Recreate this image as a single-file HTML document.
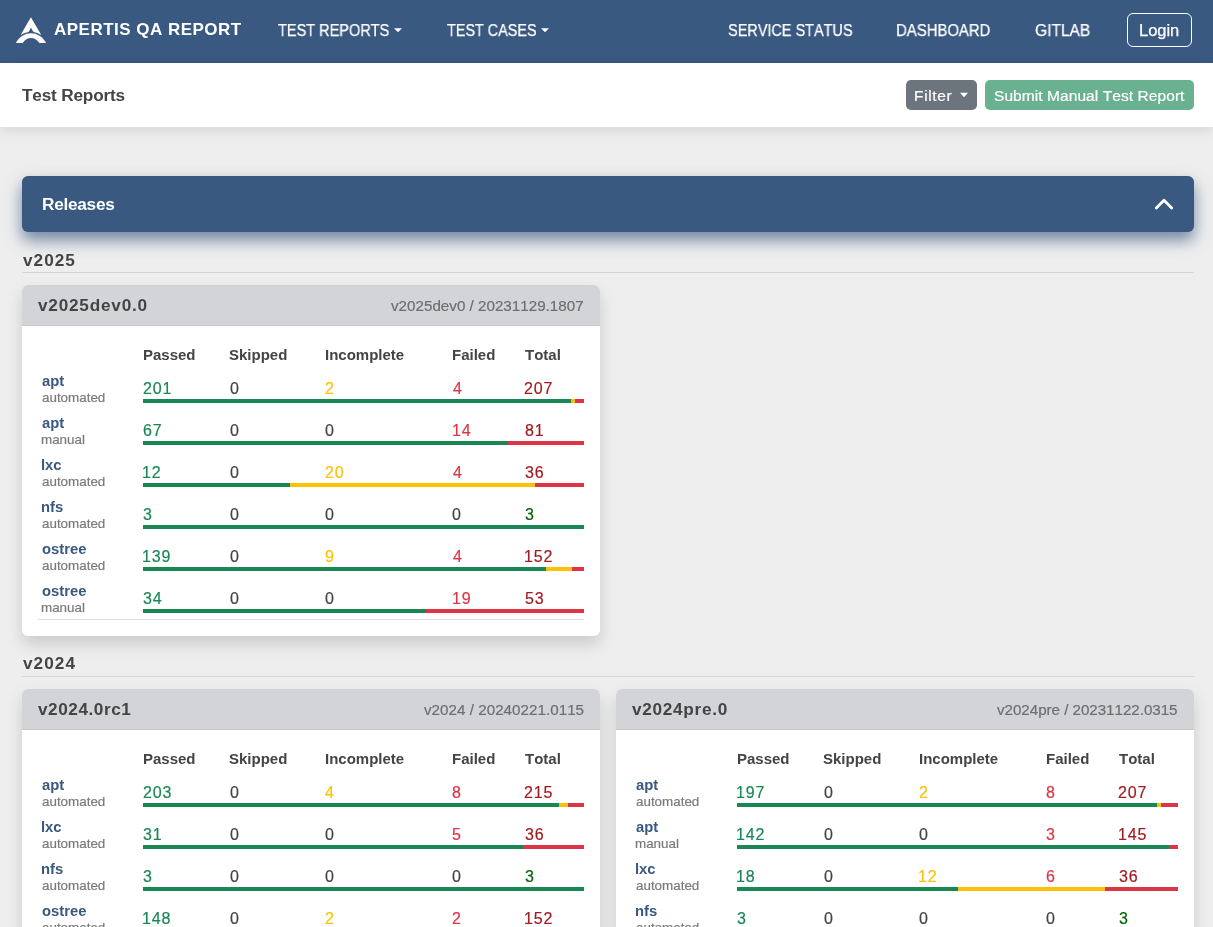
<!DOCTYPE html>
<html><head><meta charset="utf-8"><title>Apertis QA Report</title>
<style>
html,body{margin:0;padding:0;}
body{width:1213px;height:927px;overflow:hidden;position:relative;background:#eeeeee;font-family:"Liberation Sans",sans-serif;font-kerning:none;}
.t{position:absolute;white-space:nowrap;will-change:transform;font-family:"Liberation Sans",sans-serif;}
</style></head><body>
<div style="position:absolute;left:0px;top:0px;width:1213px;height:63px;background:#3a5980;"></div>
<svg style="position:absolute;left:0;top:0" width="60" height="63" viewBox="0 0 60 63">
<path fill="#fff" d="M30.9,17.2 L41.3,35 Q37,32.6 33.6,32 Q32,30.2 31,27.6 Q30,30.2 28.4,32 Q25,32.6 20.6,35 Z"/>
<path fill="#fff" d="M15.8,42.9 C19.5,36.6 25,33.3 31,33.3 C37,33.3 42.5,36.6 46.2,42.9 L39.3,42.9 C37,39.8 34.3,38.1 31,38.1 C27.7,38.1 25,39.8 22.7,42.9 Z"/>
</svg>
<div class="t" style="left:54.08px;top:21px;font-size:17px;line-height:17px;color:#fff;font-weight:bold;letter-spacing:0.478px;">APERTIS QA REPORT</div>
<div class="t" style="left:278.34px;top:23px;font-size:16px;line-height:16px;color:#fff;-webkit-text-stroke-width:0.2px;-webkit-text-stroke:0.25px #fff;transform:scaleX(0.9064);transform-origin:0.36px 0;">TEST REPORTS</div>
<svg style="position:absolute;left:393px;top:27px" width="10" height="6"><path d="M1,1.2 L9,1.2 L5,5.2Z" fill="#fff"/></svg>
<div class="t" style="left:446.54px;top:23px;font-size:16px;line-height:16px;color:#fff;-webkit-text-stroke-width:0.2px;-webkit-text-stroke:0.25px #fff;transform:scaleX(0.8986);transform-origin:0.36px 0;">TEST CASES</div>
<svg style="position:absolute;left:540px;top:27px" width="10" height="6"><path d="M1,1.2 L9,1.2 L5,5.2Z" fill="#fff"/></svg>
<div class="t" style="left:728.47px;top:23px;font-size:16px;line-height:16px;color:#fff;-webkit-text-stroke-width:0.2px;-webkit-text-stroke:0.25px #fff;transform:scaleX(0.9029);transform-origin:0.73px 0;">SERVICE STATUS</div>
<div class="t" style="left:896.39px;top:23px;font-size:16px;line-height:16px;color:#fff;-webkit-text-stroke-width:0.2px;-webkit-text-stroke:0.25px #fff;transform:scaleX(0.9298);transform-origin:1.31px 0;">DASHBOARD</div>
<div class="t" style="left:1035.10px;top:23px;font-size:16px;line-height:16px;color:#fff;-webkit-text-stroke-width:0.2px;-webkit-text-stroke:0.25px #fff;transform:scaleX(0.9700);transform-origin:0.80px 0;">GITLAB</div>
<div style="position:absolute;left:1127px;top:13px;width:63px;height:32px;border:1px solid #fff;border-radius:6px;"></div>
<div class="t" style="left:1139.09px;top:23px;font-size:16px;line-height:16px;color:#fff;-webkit-text-stroke-width:0.2px;-webkit-text-stroke:0.25px #fff;transform:scaleX(1.0300);transform-origin:1.31px 0;">Login</div>
<div style="position:absolute;left:0px;top:63px;width:1213px;height:64px;background:#fff;box-shadow:0 4px 12px rgba(0,0,0,0.1);"></div>
<div class="t" style="left:22.41px;top:87px;font-size:17.2px;line-height:17.2px;color:#444;font-weight:bold;letter-spacing:-0.176px;">Test Reports</div>
<div style="position:absolute;left:906px;top:80px;width:71px;height:30px;background:#6c757d;border-radius:5px;"></div>
<div class="t" style="left:914.43px;top:88px;font-size:15.5px;line-height:15.5px;color:#fff;-webkit-text-stroke-width:0.2px;letter-spacing:0.657px;">Filter</div>
<svg style="position:absolute;left:959px;top:91px" width="10" height="8"><path d="M1,1.7 L9,1.7 L5,6.3Z" fill="#fff"/></svg>
<div style="position:absolute;left:985px;top:80px;width:209px;height:30px;background:#69b190;border-radius:5px;"></div>
<div class="t" style="left:993.90px;top:88px;font-size:15.5px;line-height:15.5px;color:#fff;-webkit-text-stroke-width:0.2px;letter-spacing:0.073px;">Submit Manual Test Report</div>
<div style="position:absolute;left:22px;top:176px;width:1172px;height:56px;background:#3a5980;border-radius:6px;box-shadow:0 8px 16px rgba(58,89,128,0.7);"></div>
<div class="t" style="left:41.75px;top:196px;font-size:17.2px;line-height:17.2px;color:#fff;font-weight:bold;letter-spacing:-0.248px;">Releases</div>
<svg style="position:absolute;left:1150px;top:192px" width="30" height="24"><path d="M6.3,16 L14,8.3 L21.7,16" fill="none" stroke="#fff" stroke-width="2.8" stroke-linecap="round" stroke-linejoin="round"/></svg>
<div class="t" style="left:22.73px;top:252px;font-size:17.2px;line-height:17.2px;color:#444;font-weight:bold;letter-spacing:1.029px;">v2025</div>
<div style="position:absolute;left:22px;top:272px;width:1172px;height:1px;background:#d4d4d4;"></div>
<div style="position:absolute;left:22px;top:285px;width:578px;height:351px;background:#fff;border-radius:6px;box-shadow:0 8px 16px rgba(0,0,0,0.15);overflow:hidden;"></div>
<div style="position:absolute;left:22px;top:285px;width:578px;height:40px;background:#d3d4d8;border-radius:6px 6px 0 0;border-bottom:1px solid #c6c7cb;"></div>
<div class="t" style="left:38.23px;top:297px;font-size:17.2px;line-height:17.2px;color:#444;font-weight:bold;letter-spacing:0.780px;">v2025dev0.0</div>
<div class="t" style="left:391.25px;top:298px;font-size:15.2px;line-height:15.2px;color:#6e6e6e;-webkit-text-stroke-width:0.2px;letter-spacing:0.004px;">v2025dev0 / 20231129.1807</div>
<div class="t" style="left:143.10px;top:347px;font-size:15px;line-height:15px;color:#444;font-weight:bold;">Passed</div>
<div class="t" style="left:229.37px;top:347px;font-size:15px;line-height:15px;color:#444;font-weight:bold;">Skipped</div>
<div class="t" style="left:324.60px;top:347px;font-size:15px;line-height:15px;color:#444;font-weight:bold;">Incomplete</div>
<div class="t" style="left:452.10px;top:347px;font-size:15px;line-height:15px;color:#444;font-weight:bold;">Failed</div>
<div class="t" style="left:525.03px;top:347px;font-size:15px;line-height:15px;color:#444;font-weight:bold;">Total</div>
<div class="t" style="left:41.77px;top:374px;font-size:14.8px;line-height:14.8px;color:#3a5980;font-weight:bold;">apt</div>
<div class="t" style="left:41.63px;top:391px;font-size:13.4px;line-height:13.4px;color:#7a7a7a;-webkit-text-stroke-width:0.2px;">automated</div>
<div class="t" style="left:142.80px;top:381px;font-size:16px;line-height:16px;color:#198754;-webkit-text-stroke-width:0.2px;letter-spacing:0.8px;">201</div>
<div class="t" style="left:229.68px;top:381px;font-size:16px;line-height:16px;color:#444;-webkit-text-stroke-width:0.2px;letter-spacing:0.8px;">0</div>
<div class="t" style="left:324.80px;top:381px;font-size:16px;line-height:16px;color:#ffc107;-webkit-text-stroke-width:0.2px;letter-spacing:0.8px;">2</div>
<div class="t" style="left:452.73px;top:381px;font-size:16px;line-height:16px;color:#dc3545;-webkit-text-stroke-width:0.2px;letter-spacing:0.8px;">4</div>
<div class="t" style="left:524.40px;top:381px;font-size:16px;line-height:16px;color:#a01c22;-webkit-text-stroke-width:0.2px;letter-spacing:0.8px;">207</div>
<div style="position:absolute;left:143px;top:399px;width:441.0px;height:4px;display:flex"><div style="flex:201 0 0;background:#198754"></div><div style="flex:2 0 0;background:#ffc107"></div><div style="flex:4 0 0;background:#dc3545"></div></div>
<div class="t" style="left:41.77px;top:416px;font-size:14.8px;line-height:14.8px;color:#3a5980;font-weight:bold;">apt</div>
<div class="t" style="left:41.31px;top:433px;font-size:13.4px;line-height:13.4px;color:#7a7a7a;-webkit-text-stroke-width:0.2px;">manual</div>
<div class="t" style="left:142.79px;top:423px;font-size:16px;line-height:16px;color:#198754;-webkit-text-stroke-width:0.2px;letter-spacing:0.8px;">67</div>
<div class="t" style="left:229.68px;top:423px;font-size:16px;line-height:16px;color:#444;-webkit-text-stroke-width:0.2px;letter-spacing:0.8px;">0</div>
<div class="t" style="left:324.98px;top:423px;font-size:16px;line-height:16px;color:#444;-webkit-text-stroke-width:0.2px;letter-spacing:0.8px;">0</div>
<div class="t" style="left:451.88px;top:423px;font-size:16px;line-height:16px;color:#dc3545;-webkit-text-stroke-width:0.2px;letter-spacing:0.8px;">14</div>
<div class="t" style="left:524.50px;top:423px;font-size:16px;line-height:16px;color:#a01c22;-webkit-text-stroke-width:0.2px;letter-spacing:0.8px;">81</div>
<div style="position:absolute;left:143px;top:441px;width:441.0px;height:4px;display:flex"><div style="flex:67 0 0;background:#198754"></div><div style="flex:14 0 0;background:#dc3545"></div></div>
<div class="t" style="left:41.17px;top:458px;font-size:14.8px;line-height:14.8px;color:#3a5980;font-weight:bold;">lxc</div>
<div class="t" style="left:41.63px;top:475px;font-size:13.4px;line-height:13.4px;color:#7a7a7a;-webkit-text-stroke-width:0.2px;">automated</div>
<div class="t" style="left:142.38px;top:465px;font-size:16px;line-height:16px;color:#198754;-webkit-text-stroke-width:0.2px;letter-spacing:0.8px;">12</div>
<div class="t" style="left:229.68px;top:465px;font-size:16px;line-height:16px;color:#444;-webkit-text-stroke-width:0.2px;letter-spacing:0.8px;">0</div>
<div class="t" style="left:324.80px;top:465px;font-size:16px;line-height:16px;color:#ffc107;-webkit-text-stroke-width:0.2px;letter-spacing:0.8px;">20</div>
<div class="t" style="left:452.73px;top:465px;font-size:16px;line-height:16px;color:#dc3545;-webkit-text-stroke-width:0.2px;letter-spacing:0.8px;">4</div>
<div class="t" style="left:524.59px;top:465px;font-size:16px;line-height:16px;color:#a01c22;-webkit-text-stroke-width:0.2px;letter-spacing:0.8px;">36</div>
<div style="position:absolute;left:143px;top:483px;width:441.0px;height:4px;display:flex"><div style="flex:12 0 0;background:#198754"></div><div style="flex:20 0 0;background:#ffc107"></div><div style="flex:4 0 0;background:#dc3545"></div></div>
<div class="t" style="left:41.22px;top:500px;font-size:14.8px;line-height:14.8px;color:#3a5980;font-weight:bold;">nfs</div>
<div class="t" style="left:41.63px;top:517px;font-size:13.4px;line-height:13.4px;color:#7a7a7a;-webkit-text-stroke-width:0.2px;">automated</div>
<div class="t" style="left:142.99px;top:507px;font-size:16px;line-height:16px;color:#198754;-webkit-text-stroke-width:0.2px;letter-spacing:0.8px;">3</div>
<div class="t" style="left:229.68px;top:507px;font-size:16px;line-height:16px;color:#444;-webkit-text-stroke-width:0.2px;letter-spacing:0.8px;">0</div>
<div class="t" style="left:324.98px;top:507px;font-size:16px;line-height:16px;color:#444;-webkit-text-stroke-width:0.2px;letter-spacing:0.8px;">0</div>
<div class="t" style="left:452.48px;top:507px;font-size:16px;line-height:16px;color:#444;-webkit-text-stroke-width:0.2px;letter-spacing:0.8px;">0</div>
<div class="t" style="left:524.59px;top:507px;font-size:16px;line-height:16px;color:#006400;-webkit-text-stroke-width:0.2px;letter-spacing:0.8px;">3</div>
<div style="position:absolute;left:143px;top:525px;width:441.0px;height:4px;display:flex"><div style="flex:3 0 0;background:#198754"></div></div>
<div class="t" style="left:41.62px;top:542px;font-size:14.8px;line-height:14.8px;color:#3a5980;font-weight:bold;">ostree</div>
<div class="t" style="left:41.63px;top:559px;font-size:13.4px;line-height:13.4px;color:#7a7a7a;-webkit-text-stroke-width:0.2px;">automated</div>
<div class="t" style="left:142.38px;top:549px;font-size:16px;line-height:16px;color:#198754;-webkit-text-stroke-width:0.2px;letter-spacing:0.8px;">139</div>
<div class="t" style="left:229.68px;top:549px;font-size:16px;line-height:16px;color:#444;-webkit-text-stroke-width:0.2px;letter-spacing:0.8px;">0</div>
<div class="t" style="left:324.85px;top:549px;font-size:16px;line-height:16px;color:#ffc107;-webkit-text-stroke-width:0.2px;letter-spacing:0.8px;">9</div>
<div class="t" style="left:452.73px;top:549px;font-size:16px;line-height:16px;color:#dc3545;-webkit-text-stroke-width:0.2px;letter-spacing:0.8px;">4</div>
<div class="t" style="left:523.98px;top:549px;font-size:16px;line-height:16px;color:#a01c22;-webkit-text-stroke-width:0.2px;letter-spacing:0.8px;">152</div>
<div style="position:absolute;left:143px;top:567px;width:441.0px;height:4px;display:flex"><div style="flex:139 0 0;background:#198754"></div><div style="flex:9 0 0;background:#ffc107"></div><div style="flex:4 0 0;background:#dc3545"></div></div>
<div class="t" style="left:41.62px;top:584px;font-size:14.8px;line-height:14.8px;color:#3a5980;font-weight:bold;">ostree</div>
<div class="t" style="left:41.31px;top:601px;font-size:13.4px;line-height:13.4px;color:#7a7a7a;-webkit-text-stroke-width:0.2px;">manual</div>
<div class="t" style="left:142.99px;top:591px;font-size:16px;line-height:16px;color:#198754;-webkit-text-stroke-width:0.2px;letter-spacing:0.8px;">34</div>
<div class="t" style="left:229.68px;top:591px;font-size:16px;line-height:16px;color:#444;-webkit-text-stroke-width:0.2px;letter-spacing:0.8px;">0</div>
<div class="t" style="left:324.98px;top:591px;font-size:16px;line-height:16px;color:#444;-webkit-text-stroke-width:0.2px;letter-spacing:0.8px;">0</div>
<div class="t" style="left:451.88px;top:591px;font-size:16px;line-height:16px;color:#dc3545;-webkit-text-stroke-width:0.2px;letter-spacing:0.8px;">19</div>
<div class="t" style="left:524.56px;top:591px;font-size:16px;line-height:16px;color:#a01c22;-webkit-text-stroke-width:0.2px;letter-spacing:0.8px;">53</div>
<div style="position:absolute;left:143px;top:609px;width:441.0px;height:4px;display:flex"><div style="flex:34 0 0;background:#198754"></div><div style="flex:19 0 0;background:#dc3545"></div></div>
<div style="position:absolute;left:38px;top:619px;width:546px;height:1px;background:#dedede;"></div>
<div class="t" style="left:22.73px;top:655px;font-size:17.2px;line-height:17.2px;color:#444;font-weight:bold;letter-spacing:1.058px;">v2024</div>
<div style="position:absolute;left:22px;top:676px;width:1172px;height:1px;background:#d4d4d4;"></div>
<div style="position:absolute;left:22px;top:689px;width:578px;height:309px;background:#fff;border-radius:6px;box-shadow:0 8px 16px rgba(0,0,0,0.15);overflow:hidden;"></div>
<div style="position:absolute;left:22px;top:689px;width:578px;height:40px;background:#d3d4d8;border-radius:6px 6px 0 0;border-bottom:1px solid #c6c7cb;"></div>
<div class="t" style="left:38.23px;top:701px;font-size:17.2px;line-height:17.2px;color:#444;font-weight:bold;letter-spacing:0.539px;">v2024.0rc1</div>
<div class="t" style="left:423.75px;top:702px;font-size:15.2px;line-height:15.2px;color:#6e6e6e;-webkit-text-stroke-width:0.2px;letter-spacing:0.022px;">v2024 / 20240221.0115</div>
<div class="t" style="left:143.10px;top:751px;font-size:15px;line-height:15px;color:#444;font-weight:bold;">Passed</div>
<div class="t" style="left:229.37px;top:751px;font-size:15px;line-height:15px;color:#444;font-weight:bold;">Skipped</div>
<div class="t" style="left:324.60px;top:751px;font-size:15px;line-height:15px;color:#444;font-weight:bold;">Incomplete</div>
<div class="t" style="left:452.10px;top:751px;font-size:15px;line-height:15px;color:#444;font-weight:bold;">Failed</div>
<div class="t" style="left:525.03px;top:751px;font-size:15px;line-height:15px;color:#444;font-weight:bold;">Total</div>
<div class="t" style="left:41.77px;top:778px;font-size:14.8px;line-height:14.8px;color:#3a5980;font-weight:bold;">apt</div>
<div class="t" style="left:41.63px;top:795px;font-size:13.4px;line-height:13.4px;color:#7a7a7a;-webkit-text-stroke-width:0.2px;">automated</div>
<div class="t" style="left:142.80px;top:785px;font-size:16px;line-height:16px;color:#198754;-webkit-text-stroke-width:0.2px;letter-spacing:0.8px;">203</div>
<div class="t" style="left:229.68px;top:785px;font-size:16px;line-height:16px;color:#444;-webkit-text-stroke-width:0.2px;letter-spacing:0.8px;">0</div>
<div class="t" style="left:325.23px;top:785px;font-size:16px;line-height:16px;color:#ffc107;-webkit-text-stroke-width:0.2px;letter-spacing:0.8px;">4</div>
<div class="t" style="left:452.40px;top:785px;font-size:16px;line-height:16px;color:#dc3545;-webkit-text-stroke-width:0.2px;letter-spacing:0.8px;">8</div>
<div class="t" style="left:524.40px;top:785px;font-size:16px;line-height:16px;color:#a01c22;-webkit-text-stroke-width:0.2px;letter-spacing:0.8px;">215</div>
<div style="position:absolute;left:143px;top:803px;width:441.0px;height:4px;display:flex"><div style="flex:203 0 0;background:#198754"></div><div style="flex:4 0 0;background:#ffc107"></div><div style="flex:8 0 0;background:#dc3545"></div></div>
<div class="t" style="left:41.17px;top:820px;font-size:14.8px;line-height:14.8px;color:#3a5980;font-weight:bold;">lxc</div>
<div class="t" style="left:41.63px;top:837px;font-size:13.4px;line-height:13.4px;color:#7a7a7a;-webkit-text-stroke-width:0.2px;">automated</div>
<div class="t" style="left:142.99px;top:827px;font-size:16px;line-height:16px;color:#198754;-webkit-text-stroke-width:0.2px;letter-spacing:0.8px;">31</div>
<div class="t" style="left:229.68px;top:827px;font-size:16px;line-height:16px;color:#444;-webkit-text-stroke-width:0.2px;letter-spacing:0.8px;">0</div>
<div class="t" style="left:324.98px;top:827px;font-size:16px;line-height:16px;color:#444;-webkit-text-stroke-width:0.2px;letter-spacing:0.8px;">0</div>
<div class="t" style="left:452.46px;top:827px;font-size:16px;line-height:16px;color:#dc3545;-webkit-text-stroke-width:0.2px;letter-spacing:0.8px;">5</div>
<div class="t" style="left:524.59px;top:827px;font-size:16px;line-height:16px;color:#a01c22;-webkit-text-stroke-width:0.2px;letter-spacing:0.8px;">36</div>
<div style="position:absolute;left:143px;top:845px;width:441.0px;height:4px;display:flex"><div style="flex:31 0 0;background:#198754"></div><div style="flex:5 0 0;background:#dc3545"></div></div>
<div class="t" style="left:41.22px;top:862px;font-size:14.8px;line-height:14.8px;color:#3a5980;font-weight:bold;">nfs</div>
<div class="t" style="left:41.63px;top:879px;font-size:13.4px;line-height:13.4px;color:#7a7a7a;-webkit-text-stroke-width:0.2px;">automated</div>
<div class="t" style="left:142.99px;top:869px;font-size:16px;line-height:16px;color:#198754;-webkit-text-stroke-width:0.2px;letter-spacing:0.8px;">3</div>
<div class="t" style="left:229.68px;top:869px;font-size:16px;line-height:16px;color:#444;-webkit-text-stroke-width:0.2px;letter-spacing:0.8px;">0</div>
<div class="t" style="left:324.98px;top:869px;font-size:16px;line-height:16px;color:#444;-webkit-text-stroke-width:0.2px;letter-spacing:0.8px;">0</div>
<div class="t" style="left:452.48px;top:869px;font-size:16px;line-height:16px;color:#444;-webkit-text-stroke-width:0.2px;letter-spacing:0.8px;">0</div>
<div class="t" style="left:524.59px;top:869px;font-size:16px;line-height:16px;color:#006400;-webkit-text-stroke-width:0.2px;letter-spacing:0.8px;">3</div>
<div style="position:absolute;left:143px;top:887px;width:441.0px;height:4px;display:flex"><div style="flex:3 0 0;background:#198754"></div></div>
<div class="t" style="left:41.62px;top:904px;font-size:14.8px;line-height:14.8px;color:#3a5980;font-weight:bold;">ostree</div>
<div class="t" style="left:41.63px;top:921px;font-size:13.4px;line-height:13.4px;color:#7a7a7a;-webkit-text-stroke-width:0.2px;">automated</div>
<div class="t" style="left:142.38px;top:911px;font-size:16px;line-height:16px;color:#198754;-webkit-text-stroke-width:0.2px;letter-spacing:0.8px;">148</div>
<div class="t" style="left:229.68px;top:911px;font-size:16px;line-height:16px;color:#444;-webkit-text-stroke-width:0.2px;letter-spacing:0.8px;">0</div>
<div class="t" style="left:324.80px;top:911px;font-size:16px;line-height:16px;color:#ffc107;-webkit-text-stroke-width:0.2px;letter-spacing:0.8px;">2</div>
<div class="t" style="left:452.30px;top:911px;font-size:16px;line-height:16px;color:#dc3545;-webkit-text-stroke-width:0.2px;letter-spacing:0.8px;">2</div>
<div class="t" style="left:523.98px;top:911px;font-size:16px;line-height:16px;color:#a01c22;-webkit-text-stroke-width:0.2px;letter-spacing:0.8px;">152</div>
<div style="position:absolute;left:143px;top:929px;width:441.0px;height:4px;display:flex"><div style="flex:148 0 0;background:#198754"></div><div style="flex:2 0 0;background:#ffc107"></div><div style="flex:2 0 0;background:#dc3545"></div></div>
<div class="t" style="left:41.62px;top:946px;font-size:14.8px;line-height:14.8px;color:#3a5980;font-weight:bold;">ostree</div>
<div class="t" style="left:41.31px;top:963px;font-size:13.4px;line-height:13.4px;color:#7a7a7a;-webkit-text-stroke-width:0.2px;">manual</div>
<div class="t" style="left:142.99px;top:953px;font-size:16px;line-height:16px;color:#198754;-webkit-text-stroke-width:0.2px;letter-spacing:0.8px;">30</div>
<div class="t" style="left:229.68px;top:953px;font-size:16px;line-height:16px;color:#444;-webkit-text-stroke-width:0.2px;letter-spacing:0.8px;">0</div>
<div class="t" style="left:324.98px;top:953px;font-size:16px;line-height:16px;color:#444;-webkit-text-stroke-width:0.2px;letter-spacing:0.8px;">0</div>
<div class="t" style="left:452.46px;top:953px;font-size:16px;line-height:16px;color:#dc3545;-webkit-text-stroke-width:0.2px;letter-spacing:0.8px;">5</div>
<div class="t" style="left:524.59px;top:953px;font-size:16px;line-height:16px;color:#a01c22;-webkit-text-stroke-width:0.2px;letter-spacing:0.8px;">35</div>
<div style="position:absolute;left:143px;top:971px;width:441.0px;height:4px;display:flex"><div style="flex:30 0 0;background:#198754"></div><div style="flex:5 0 0;background:#dc3545"></div></div>
<div style="position:absolute;left:38px;top:1023px;width:546px;height:1px;background:#dedede;"></div>
<div style="position:absolute;left:616px;top:689px;width:578px;height:309px;background:#fff;border-radius:6px;box-shadow:0 8px 16px rgba(0,0,0,0.15);overflow:hidden;"></div>
<div style="position:absolute;left:616px;top:689px;width:578px;height:40px;background:#d3d4d8;border-radius:6px 6px 0 0;border-bottom:1px solid #c6c7cb;"></div>
<div class="t" style="left:632.23px;top:701px;font-size:17.2px;line-height:17.2px;color:#444;font-weight:bold;letter-spacing:0.715px;">v2024pre.0</div>
<div class="t" style="left:997.25px;top:702px;font-size:15.2px;line-height:15.2px;color:#6e6e6e;-webkit-text-stroke-width:0.2px;letter-spacing:-0.045px;">v2024pre / 20231122.0315</div>
<div class="t" style="left:737.10px;top:751px;font-size:15px;line-height:15px;color:#444;font-weight:bold;">Passed</div>
<div class="t" style="left:823.37px;top:751px;font-size:15px;line-height:15px;color:#444;font-weight:bold;">Skipped</div>
<div class="t" style="left:918.60px;top:751px;font-size:15px;line-height:15px;color:#444;font-weight:bold;">Incomplete</div>
<div class="t" style="left:1046.10px;top:751px;font-size:15px;line-height:15px;color:#444;font-weight:bold;">Failed</div>
<div class="t" style="left:1119.03px;top:751px;font-size:15px;line-height:15px;color:#444;font-weight:bold;">Total</div>
<div class="t" style="left:635.77px;top:778px;font-size:14.8px;line-height:14.8px;color:#3a5980;font-weight:bold;">apt</div>
<div class="t" style="left:635.63px;top:795px;font-size:13.4px;line-height:13.4px;color:#7a7a7a;-webkit-text-stroke-width:0.2px;">automated</div>
<div class="t" style="left:736.38px;top:785px;font-size:16px;line-height:16px;color:#198754;-webkit-text-stroke-width:0.2px;letter-spacing:0.8px;">197</div>
<div class="t" style="left:823.67px;top:785px;font-size:16px;line-height:16px;color:#444;-webkit-text-stroke-width:0.2px;letter-spacing:0.8px;">0</div>
<div class="t" style="left:918.80px;top:785px;font-size:16px;line-height:16px;color:#ffc107;-webkit-text-stroke-width:0.2px;letter-spacing:0.8px;">2</div>
<div class="t" style="left:1046.40px;top:785px;font-size:16px;line-height:16px;color:#dc3545;-webkit-text-stroke-width:0.2px;letter-spacing:0.8px;">8</div>
<div class="t" style="left:1118.40px;top:785px;font-size:16px;line-height:16px;color:#a01c22;-webkit-text-stroke-width:0.2px;letter-spacing:0.8px;">207</div>
<div style="position:absolute;left:737px;top:803px;width:441.0px;height:4px;display:flex"><div style="flex:197 0 0;background:#198754"></div><div style="flex:2 0 0;background:#ffc107"></div><div style="flex:8 0 0;background:#dc3545"></div></div>
<div class="t" style="left:635.77px;top:820px;font-size:14.8px;line-height:14.8px;color:#3a5980;font-weight:bold;">apt</div>
<div class="t" style="left:635.31px;top:837px;font-size:13.4px;line-height:13.4px;color:#7a7a7a;-webkit-text-stroke-width:0.2px;">manual</div>
<div class="t" style="left:736.38px;top:827px;font-size:16px;line-height:16px;color:#198754;-webkit-text-stroke-width:0.2px;letter-spacing:0.8px;">142</div>
<div class="t" style="left:823.67px;top:827px;font-size:16px;line-height:16px;color:#444;-webkit-text-stroke-width:0.2px;letter-spacing:0.8px;">0</div>
<div class="t" style="left:918.98px;top:827px;font-size:16px;line-height:16px;color:#444;-webkit-text-stroke-width:0.2px;letter-spacing:0.8px;">0</div>
<div class="t" style="left:1046.49px;top:827px;font-size:16px;line-height:16px;color:#dc3545;-webkit-text-stroke-width:0.2px;letter-spacing:0.8px;">3</div>
<div class="t" style="left:1117.98px;top:827px;font-size:16px;line-height:16px;color:#a01c22;-webkit-text-stroke-width:0.2px;letter-spacing:0.8px;">145</div>
<div style="position:absolute;left:737px;top:845px;width:441.0px;height:4px;display:flex"><div style="flex:142 0 0;background:#198754"></div><div style="flex:3 0 0;background:#dc3545"></div></div>
<div class="t" style="left:635.17px;top:862px;font-size:14.8px;line-height:14.8px;color:#3a5980;font-weight:bold;">lxc</div>
<div class="t" style="left:635.63px;top:879px;font-size:13.4px;line-height:13.4px;color:#7a7a7a;-webkit-text-stroke-width:0.2px;">automated</div>
<div class="t" style="left:736.38px;top:869px;font-size:16px;line-height:16px;color:#198754;-webkit-text-stroke-width:0.2px;letter-spacing:0.8px;">18</div>
<div class="t" style="left:823.67px;top:869px;font-size:16px;line-height:16px;color:#444;-webkit-text-stroke-width:0.2px;letter-spacing:0.8px;">0</div>
<div class="t" style="left:918.38px;top:869px;font-size:16px;line-height:16px;color:#ffc107;-webkit-text-stroke-width:0.2px;letter-spacing:0.8px;">12</div>
<div class="t" style="left:1046.29px;top:869px;font-size:16px;line-height:16px;color:#dc3545;-webkit-text-stroke-width:0.2px;letter-spacing:0.8px;">6</div>
<div class="t" style="left:1118.59px;top:869px;font-size:16px;line-height:16px;color:#a01c22;-webkit-text-stroke-width:0.2px;letter-spacing:0.8px;">36</div>
<div style="position:absolute;left:737px;top:887px;width:441.0px;height:4px;display:flex"><div style="flex:18 0 0;background:#198754"></div><div style="flex:12 0 0;background:#ffc107"></div><div style="flex:6 0 0;background:#dc3545"></div></div>
<div class="t" style="left:635.22px;top:904px;font-size:14.8px;line-height:14.8px;color:#3a5980;font-weight:bold;">nfs</div>
<div class="t" style="left:635.63px;top:921px;font-size:13.4px;line-height:13.4px;color:#7a7a7a;-webkit-text-stroke-width:0.2px;">automated</div>
<div class="t" style="left:736.99px;top:911px;font-size:16px;line-height:16px;color:#198754;-webkit-text-stroke-width:0.2px;letter-spacing:0.8px;">3</div>
<div class="t" style="left:823.67px;top:911px;font-size:16px;line-height:16px;color:#444;-webkit-text-stroke-width:0.2px;letter-spacing:0.8px;">0</div>
<div class="t" style="left:918.98px;top:911px;font-size:16px;line-height:16px;color:#444;-webkit-text-stroke-width:0.2px;letter-spacing:0.8px;">0</div>
<div class="t" style="left:1046.47px;top:911px;font-size:16px;line-height:16px;color:#444;-webkit-text-stroke-width:0.2px;letter-spacing:0.8px;">0</div>
<div class="t" style="left:1118.59px;top:911px;font-size:16px;line-height:16px;color:#006400;-webkit-text-stroke-width:0.2px;letter-spacing:0.8px;">3</div>
<div style="position:absolute;left:737px;top:929px;width:441.0px;height:4px;display:flex"><div style="flex:3 0 0;background:#198754"></div></div>
<div class="t" style="left:635.62px;top:946px;font-size:14.8px;line-height:14.8px;color:#3a5980;font-weight:bold;">ostree</div>
<div class="t" style="left:635.63px;top:963px;font-size:13.4px;line-height:13.4px;color:#7a7a7a;-webkit-text-stroke-width:0.2px;">automated</div>
<div class="t" style="left:736.38px;top:953px;font-size:16px;line-height:16px;color:#198754;-webkit-text-stroke-width:0.2px;letter-spacing:0.8px;">140</div>
<div class="t" style="left:823.67px;top:953px;font-size:16px;line-height:16px;color:#444;-webkit-text-stroke-width:0.2px;letter-spacing:0.8px;">0</div>
<div class="t" style="left:918.96px;top:953px;font-size:16px;line-height:16px;color:#ffc107;-webkit-text-stroke-width:0.2px;letter-spacing:0.8px;">5</div>
<div class="t" style="left:1046.28px;top:953px;font-size:16px;line-height:16px;color:#dc3545;-webkit-text-stroke-width:0.2px;letter-spacing:0.8px;">7</div>
<div class="t" style="left:1117.98px;top:953px;font-size:16px;line-height:16px;color:#a01c22;-webkit-text-stroke-width:0.2px;letter-spacing:0.8px;">152</div>
<div style="position:absolute;left:737px;top:971px;width:441.0px;height:4px;display:flex"><div style="flex:140 0 0;background:#198754"></div><div style="flex:5 0 0;background:#ffc107"></div><div style="flex:7 0 0;background:#dc3545"></div></div>
<div style="position:absolute;left:632px;top:1023px;width:546px;height:1px;background:#dedede;"></div>
</body></html>
